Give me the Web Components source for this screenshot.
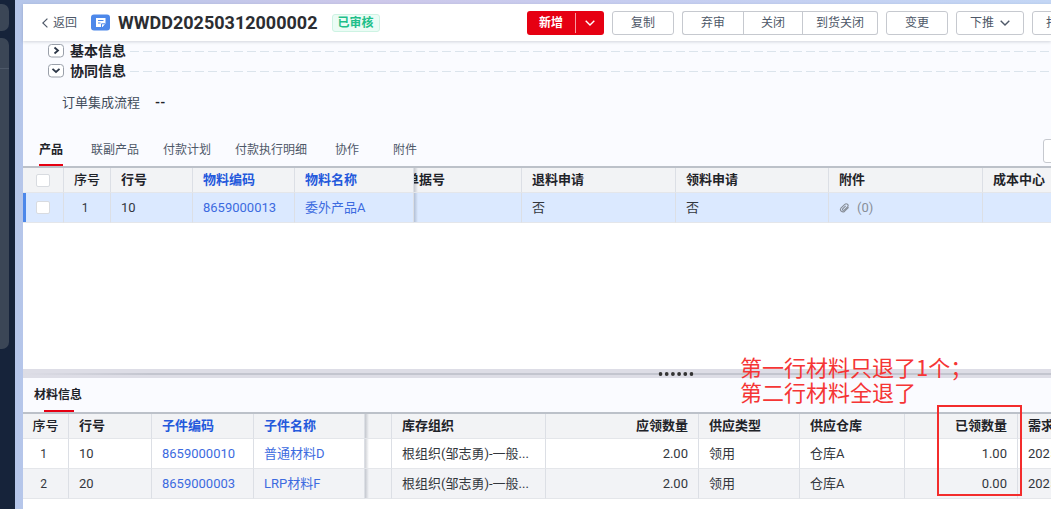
<!DOCTYPE html>
<html lang="zh-CN">
<head>
<meta charset="utf-8">
<title>WWDD20250312000002</title>
<style>
    :root {
        --ink: #1f2329;
        --muted: #4e5868;
        --link: #3c6be0;
        --red: #e60012;
        --line: #dcdfe5;
        --panel: #fafbff;
    }
    body {
        margin: 0;
        overflow: hidden;
        color: var(--ink);
        font: 12px/16px Roboto, "Noto Sans CJK SC", sans-serif;
    }
</style>
</head>
<body>
<order-app></order-app>

<script>
// Shared helper: attach an open root and fill it from markup
function render(el, html) {
    const template = document.createElement('template');
    template.innerHTML = html;
    el.attachShadow({ mode: 'open' }).appendChild(template.content.cloneNode(true));
}

// side-rail
class SideRail extends HTMLElement {
    constructor() {
        super();
        render(this, `
            <style>
                :host {
                    display: flex;
                    flex-direction: column;
                    gap: 7px;
                    width: 15px;
                    padding-top: 4px;
                    box-sizing: border-box;
                    background: #16233a;
                }
                .block {
                    width: 9px;
                    height: 27px;
                    border-radius: 0 7px 7px 0;
                    background: #3b4656;
                }
                .long { height: 311px; }
                .long::before {
                    content: "";
                    display: block;
                    height: 30px;
                    border-bottom: 1px solid #4d5868;
                }
            </style>
            <div class="block"></div>
            <div class="block long"></div>
        `);
    }
}
customElements.define('side-rail', SideRail);

// status-tag
class StatusTag extends HTMLElement {
    constructor() {
        super();
        render(this, `
            <style>
                :host {
                    display: block;
                    padding: 0 5px;
                    border: 1px solid #cdf3e3;
                    border-radius: 3px;
                    background: #ebfcf5;
                    color: #1fbf8a;
                    font-weight: bold;
                    white-space: nowrap;
                }
            </style>
            <slot></slot>
        `);
    }
}
customElements.define('status-tag', StatusTag);

// tool-button: attributes primary / arrow / tight / slot-pos
class ToolButton extends HTMLElement {
    constructor() {
        super();
        const arrow = `<svg width="10" height="6" viewBox="0 0 10 6" fill="none" stroke="currentColor" stroke-width="1.4"><path d="M.7.7 5 5 9.3.7"/></svg>`;
        const primary = this.hasAttribute('primary');
        const more = primary ? `<button class="more" aria-label="更多">${arrow}</button>` : '';
        render(this, `
            <style>
                :host { display: flex; flex: none; }
                button {
                    display: flex;
                    align-items: center;
                    justify-content: center;
                    gap: 6px;
                    height: 24px;
                    margin: 0;
                    padding: 0 18px;
                    box-sizing: border-box;
                    border: 1px solid #c6c9cf;
                    border-radius: 3px;
                    background: #fff;
                    color: var(--muted);
                    font: inherit;
                    white-space: nowrap;
                }
                :host([tight]) button { padding: 0 13px; }
                :host([primary]) button {
                    padding: 0 12px;
                    border: 0;
                    border-radius: 3px 0 0 3px;
                    background: var(--red);
                    color: #fff;
                    font-weight: bold;
                }
                :host([primary]) .more {
                    width: 29px;
                    padding: 0;
                    border-radius: 0 3px 3px 0;
                    background: linear-gradient(#f79aa1, #f79aa1) 0 50% / 1px 20px no-repeat var(--red);
                }
                :host([slot-pos="first"]) button { border-radius: 3px 0 0 3px; border-right: 0; }
                :host([slot-pos="mid"]) button { padding: 0 17px; border-radius: 0; }
                :host([slot-pos="last"]) button { border-radius: 0 3px 3px 0; border-left: 0; }
            </style>
            <button><slot></slot>${this.hasAttribute('arrow') ? arrow : ''}</button>${more}
        `);
    }
}
customElements.define('tool-button', ToolButton);

// order-header
class OrderHeader extends HTMLElement {
    constructor() {
        super();
        render(this, `
            <style>
                :host {
                    display: flex;
                    align-items: center;
                    position: relative;
                    height: 37px;
                    flex: none;
                    background: #fff;
                    box-shadow: 0 1px 3px rgba(30, 40, 60, .18);
                }
                .title {
                    display: flex;
                    align-items: center;
                    flex: 1;
                    min-width: 0;
                    padding-left: 19px;
                }
                a {
                    display: flex;
                    align-items: center;
                    gap: 5px;
                    margin-right: 14px;
                    color: var(--muted);
                    text-decoration: none;
                    white-space: nowrap;
                }
                h1 {
                    margin: 0 14px 0 8px;
                    font-size: 18px;
                    line-height: 24px;
                    color: #2b2d31;
                }
                .tools {
                    display: flex;
                    flex: 0 0 524px;
                    gap: 8px;
                    overflow: hidden;
                }
                .group { display: flex; }
            </style>
            <div class="title">
                <a href="#"><svg width="6" height="10" viewBox="0 0 6 10" fill="none" stroke="currentColor" stroke-width="1.2"><path d="M5.4.6.8 5l4.6 4.4"/></svg>返回</a>
                <svg width="19" height="17" viewBox="0 0 19 17">
                    <rect width="19" height="16" y=".5" rx="3" fill="#4d88ea"/>
                    <path d="M5 4h9.500v5.500L11.500 13H5z" fill="#fff"/>
                    <path d="M7 6.500h5.500M7 9h2.500" stroke="#4d88ea" stroke-width="1"/>
                    <path d="M10.500 13V9.800h4" stroke="#4d88ea" stroke-width="1" fill="none"/>
                </svg>
                <h1>WWDD20250312000002</h1>
                <status-tag>已审核</status-tag>
            </div>
            <div class="tools">
                <tool-button primary>新增</tool-button>
                <tool-button>复制</tool-button>
                <div class="group">
                    <tool-button slot-pos="first">弃审</tool-button>
                    <tool-button slot-pos="mid">关闭</tool-button>
                    <tool-button slot-pos="last" tight>到货关闭</tool-button>
                </div>
                <tool-button>变更</tool-button>
                <tool-button arrow tight>下推</tool-button>
                <tool-button tight>打印</tool-button>
            </div>
        `);
    }
}
customElements.define('order-header', OrderHeader);

// fold-section
class FoldSection extends HTMLElement {
    constructor() {
        super();
        const d = this.hasAttribute('open') ? 'M4.500 4.800 8 8l3.500-3.200' : 'M6.500 3.500 10 6.500 6.500 9.500';
        render(this, `
            <style>
                :host { display: block; }
                .bar { display: flex; align-items: center; height: 14px; }
                button {
                    display: flex;
                    width: 16px;
                    height: 14px;
                    margin: 0 6px 0 0;
                    padding: 0;
                    border: 0;
                    background: none;
                    color: #2d3748;
                }
                h2 { margin: 0 4px 0 0; font-size: 14px; line-height: 14px; white-space: nowrap; }
                .dash {
                    flex: 1;
                    height: 1px;
                    background: repeating-linear-gradient(90deg, #dbe4ec 0 9px, transparent 9px 13px);
                }
            </style>
            <div class="bar">
                <button aria-label="展开或收起"><svg width="16" height="14" viewBox="0 0 16 14" fill="none">
                    <rect x=".5" y=".5" width="15" height="12.500" rx="3" stroke="#9aa0aa" fill="#fff"/>
                    <path d="${d}" stroke="currentColor" stroke-width="1.800"/>
                </svg></button>
                <h2>${this.getAttribute('label')}</h2>
                <div class="dash"></div>
            </div>
            <slot></slot>
        `);
    }
}
customElements.define('fold-section', FoldSection);

// tab-strip
class TabStrip extends HTMLElement {
    constructor() {
        super();
        render(this, `
            <style>
                :host {
                    display: flex;
                    align-items: flex-start;
                    padding-left: 16px;
                    border-bottom: 2px solid #bcc1c9;
                }
                nav {
                    display: grid;
                    grid-template-columns: 52px 72px 72px 100px 58px auto;
                    flex: 1;
                }
                a {
                    justify-self: start;
                    height: 22px;
                    padding: 3px 0 0;
                    border-bottom: 2px solid transparent;
                    color: var(--muted);
                    text-decoration: none;
                    white-space: nowrap;
                }
                a.on { color: var(--ink); font-weight: bold; border-color: var(--red); }
                .extra { width: 8px; overflow: hidden; }
                button {
                    width: 24px;
                    height: 24px;
                    padding: 0;
                    border: 1px solid #c6c9cf;
                    border-radius: 3px;
                    background: #fff;
                }
            </style>
            <nav>
                <a class="on" href="#">产品</a>
                <a href="#">联副产品</a>
                <a href="#">付款计划</a>
                <a href="#">付款执行明细</a>
                <a href="#">协作</a>
                <a href="#">附件</a>
            </nav>
            <div class="extra"><button aria-label="设置"></button></div>
        `);
    }
}
customElements.define('tab-strip', TabStrip);

// data-grid: columns are { w, head, cls }, rows are arrays of cell markup
class DataGrid extends HTMLElement {
    connectedCallback() {
        if (this.shadowRoot) return;
        const { cols, rows } = GRIDS[this.getAttribute('name')];
        const cell = (tag, html, i) => `<${tag} class="${cols[i].cls || ''}">${html}</${tag}>`;
        render(this, `
            <style>
                :host { display: block; overflow: hidden; }
                table {
                    width: 100%;
                    table-layout: fixed;
                    border-spacing: 0;
                    font-size: 13px;
                    line-height: 16px;
                }
                th, td {
                    box-sizing: border-box;
                    padding: 0 10px;
                    border-right: 1px solid var(--line);
                    border-bottom: 1px solid #e4e6ea;
                    overflow: hidden;
                    text-align: left;
                    white-space: nowrap;
                }
                th { height: 25px; background: #f2f3f5; }
                td { height: 30px; color: #33373d; }
                th:last-child, td:last-child { border-right: 0; }
                tbody tr:nth-child(even) td { background: #f2f3f6; }
                tbody tr.selected td { background-color: #dbe9ff; }
                tbody tr.selected td:first-child { box-shadow: inset 3px 0 #4d88ea; }
                th.link { color: #2459dc; }
                a { color: var(--link); text-decoration: none; }
                .mid { padding: 0; text-align: center; }
                td.seq { padding-right: 4px; font-size: 12px; }
                th.seq { font-weight: 500; }
                .num { text-align: right; }
                td.clip { text-overflow: ellipsis; }
                th.edge, td.edge, tbody tr.selected td.edge, tbody tr:nth-child(even) td.edge {
                    background-image: linear-gradient(90deg, rgba(60, 70, 90, .25), rgba(60, 70, 90, 0));
                    background-size: 4px 100%;
                    background-repeat: no-repeat;
                }
                /* scrolled partly below the frozen columns */
                .under { padding-left: 0; text-indent: -8px; }
                input {
                    appearance: none;
                    display: block;
                    width: 14px;
                    height: 13px;
                    margin: 0 auto;
                    border: 1px solid #d8dbe0;
                    border-radius: 2px;
                    background: #fff;
                }
                .files { display: flex; align-items: center; gap: 7px; color: #888f99; }
            </style>
            <table>
                <colgroup>${cols.map(c => `<col${c.w ? ` style="width:${c.w}px"` : ''}>`).join('')}</colgroup>
                <thead><tr>${cols.map((c, i) => cell('th', c.head, i)).join('')}</tr></thead>
                <tbody>${rows.map(r => `<tr class="${this.hasAttribute('selected') ? 'selected' : ''}">${r.map((v, i) => cell('td', v, i)).join('')}</tr>`).join('')}</tbody>
            </table>
        `);
    }
}

const link = text => `<a href="#">${text}</a>`;
const box = label => `<input type="checkbox" aria-label="${label}">`;
const files = `<span class="files"><svg width="11" height="10" viewBox="0 0 11 10" fill="none" stroke="currentColor" stroke-width="1.100"><path d="M9.600 4.300 5.700 8.200C3.500 10 .2 7.600 1.900 5.200L5.800 1.400c1.700-1.500 4.300.4 2.900 2.300L5.200 7.100c-1 .8-2.300-.2-1.500-1.300l3-2.900"/></svg>(0)</span>`;

const GRIDS = {
    products: {
        cols: [
            { w: 41, head: box('全选'), cls: 'mid' },
            { w: 47, head: '序号', cls: 'mid seq' },
            { w: 82, head: '行号' },
            { w: 102, head: '物料编码', cls: 'link' },
            { w: 119, head: '物料名称', cls: 'link' },
            { w: 108, head: '单据号', cls: 'edge under' },
            { w: 154, head: '退料申请' },
            { w: 153, head: '领料申请' },
            { w: 154, head: '附件' },
            { head: '成本中心' }
        ],
        rows: [
            [box('选择第1行'), '1', '10', link('8659000013'), link('委外产品A'), '', '否', '否', files, '']
        ]
    },
    materials: {
        cols: [
            { w: 46, head: '序号', cls: 'mid seq' },
            { w: 83, head: '行号' },
            { w: 102, head: '子件编码', cls: 'link' },
            { w: 111, head: '子件名称', cls: 'link' },
            { w: 27, head: '', cls: 'edge' },
            { w: 154, head: '库存组织', cls: 'clip' },
            { w: 153, head: '应领数量', cls: 'num' },
            { w: 101, head: '供应类型' },
            { w: 105, head: '供应仓库' },
            { w: 113, head: '已领数量', cls: 'num' },
            { head: '需求' }
        ],
        rows: [
            ['1', '10', link('8659000010'), link('普通材料D'), '', '根组织(邹志勇)-一般...', '2.00', '领用', '仓库A', '1.00', '2025'],
            ['2', '20', link('8659000003'), link('LRP材料F'), '', '根组织(邹志勇)-一般...', '2.00', '领用', '仓库A', '0.00', '2025']
        ]
    }
};
customElements.define('data-grid', DataGrid);

// split-handle
class SplitHandle extends HTMLElement {
    constructor() {
        super();
        render(this, `
            <style>
                :host {
                    display: flex;
                    align-items: center;
                    flex: none;
                    height: 9px;
                    background: #dddde6;
                }
                .rail { flex: 357; height: 2px; background: #c3c5cf; }
                .rail.fade { flex: 635; background: linear-gradient(90deg, #dddde6, #c3c5cf 20%); }
                svg { display: block; }
            </style>
            <div class="rail fade"></div>
            <svg width="36" height="4" viewBox="0 0 36 4" fill="#333"><circle cx="2.500" cy="2" r="1.900"/><circle cx="8.700" cy="2" r="1.900"/><circle cx="14.900" cy="2" r="1.900"/><circle cx="21.100" cy="2" r="1.900"/><circle cx="27.300" cy="2" r="1.900"/><circle cx="33.500" cy="2" r="1.900"/></svg>
            <div class="rail"></div>
        `);
    }
}
customElements.define('split-handle', SplitHandle);

// review-note: red remark and frame laid over the material grid
class ReviewNote extends HTMLElement {
    constructor() {
        super();
        render(this, `
            <style>
                :host { display: contents; }
                p {
                    position: absolute;
                    left: 717px;
                    top: -24px;
                    margin: 0;
                    color: #f53535;
                    font: 22px/25px "Noto Sans CJK SC", sans-serif;
                    white-space: nowrap;
                }
                .frame {
                    position: absolute;
                    left: 914px;
                    top: 27px;
                    width: 81px;
                    height: 87px;
                    border: 2px solid #f32c2c;
                }
            </style>
            <p><slot></slot></p>
            <div class="frame"></div>
        `);
    }
}
customElements.define('review-note', ReviewNote);

// order-app
class OrderApp extends HTMLElement {
    constructor() {
        super();
        render(this, `
            <style>
                :host {
                    display: flex;
                    height: 100vh;
                    background: linear-gradient(90deg, #b4c6ea, #cdc8ea 36%, #c6cdf0 60%, #c3d6f5);
                }
                main {
                    display: flex;
                    flex-direction: column;
                    flex: 1;
                    min-width: 0;
                    margin: 4px 0 0 8px;
                    background: #fff;
                }
                .info {
                    display: flex;
                    flex-direction: column;
                    gap: 6px;
                    padding: 3px 0 28px 25px;
                    background: var(--panel);
                }
                .field { display: flex; gap: 15px; padding: 17px 0 0 14px; font-size: 13px; }
                .field span { color: #414b5a; }
                tab-strip { background: var(--panel); }
                .upper { flex: 1; min-height: 0; overflow: hidden; }
                .lower { position: relative; flex: none; padding-bottom: 10px; background: #fff; }
                .head {
                    height: 34px;
                    padding-left: 11px;
                    box-sizing: border-box;
                    background: var(--panel);
                }
                .head h2 { margin: 0; padding-top: 9px; font-size: 12px; line-height: 16px; }
                .head h2::after {
                    content: "";
                    display: block;
                    width: 30px;
                    height: 2px;
                    margin: 7px 0 0 10px;
                    background: var(--red);
                }
                .lower data-grid { border-top: 2px solid #bcc1c9; }
            </style>
            <side-rail></side-rail>
            <main>
                <order-header></order-header>
                <div class="upper">
                    <div class="info">
                        <fold-section label="基本信息"></fold-section>
                        <fold-section label="协同信息" open>
                            <div class="field"><span>订单集成流程</span><b>--</b></div>
                        </fold-section>
                    </div>
                    <tab-strip></tab-strip>
                    <data-grid name="products" selected></data-grid>
                </div>
                <split-handle></split-handle>
                <div class="lower">
                    <div class="head"><h2>材料信息</h2></div>
                    <data-grid name="materials"></data-grid>
                    <review-note>第一行材料只退了1个；<br>第二行材料全退了</review-note>
                </div>
            </main>
        `);
    }
}
customElements.define('order-app', OrderApp);
</script>
</body>
</html>
